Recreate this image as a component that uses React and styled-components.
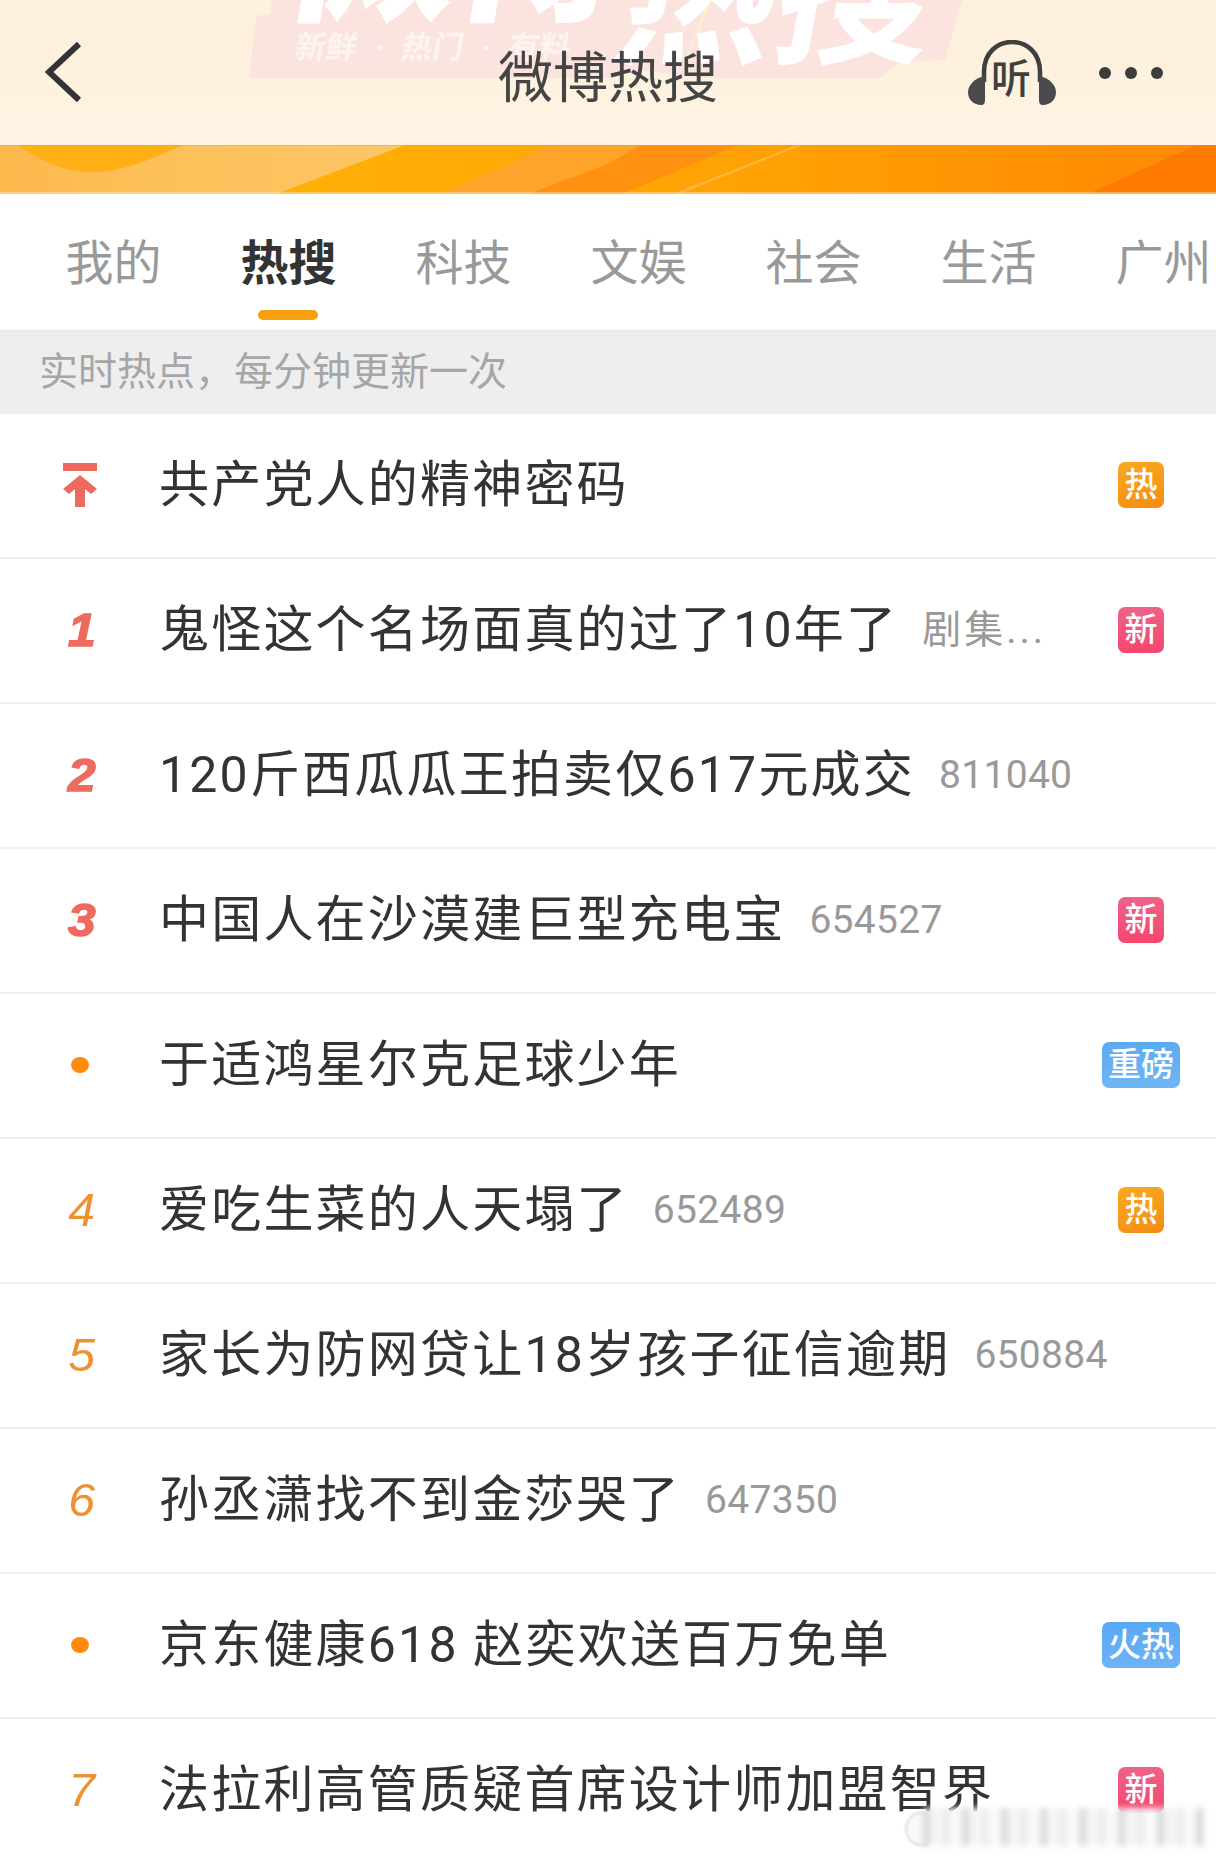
import React from "react";
import styled, { createGlobalStyle } from "styled-components";

const tabs = ["我的", "热搜", "科技", "文娱", "社会", "生活", "广州"];

const rows = [
  { rank: "top", title: "共产党人的精神密码", badge: "热" },
  { rank: "1", title: "鬼怪这个名场面真的过了10年了", sub: "剧集...", badge: "新" },
  { rank: "2", title: "120斤西瓜瓜王拍卖仅617元成交", sub: "811040" },
  { rank: "3", title: "中国人在沙漠建巨型充电宝", sub: "654527", badge: "新" },
  { rank: "dot", title: "于适鸿星尔克足球少年", badge: "重磅" },
  { rank: "4", title: "爱吃生菜的人天塌了", sub: "652489", badge: "热" },
  { rank: "5", title: "家长为防网贷让18岁孩子征信逾期", sub: "650884" },
  { rank: "6", title: "孙丞潇找不到金莎哭了", sub: "647350" },
  { rank: "dot", title: "京东健康618 赵奕欢送百万免单", badge: "火热" },
  { rank: "7", title: "法拉利高管质疑首席设计师加盟智界", badge: "新" },
];

const badgeColors = {
  热: "linear-gradient(160deg, #f9a922, #f58c12)",
  新: "linear-gradient(180deg, #ee6388, #f6466f)",
  重磅: "linear-gradient(180deg, #5caaf0, #6fb6f4)",
  火热: "linear-gradient(180deg, #5aa8f5, #6db3f8)",
};

const App = () => {
  return (
    <Page>
      <GlobalStyle />
      <Header>
        <BannerArt viewBox="0 0 1216 145" aria-hidden="true">
          <path
            d="M272 0 L270 14 L256 16 L249 78 L610 78 L640 70 L700 78 L880 78 L900 62 L945 60 L962 0 Z"
            fill="#fbe4df"
          />
          <path d="M708 0 L686 60 L700 28 L712 0 Z" fill="#fdf1c6" />
        </BannerArt>
        <BannerBig aria-hidden="true">微博</BannerBig>
        <BannerBigRight aria-hidden="true">热搜</BannerBigRight>
        <BannerSmall aria-hidden="true">新鲜 · 热门 · 有料</BannerSmall>
        <BackIcon viewBox="0 0 37 62">
          <path d="M34 3 L4 31 L34 59" fill="none" stroke="#333" strokeWidth="6" />
        </BackIcon>
        <Title>微博热搜</Title>
        <HeaderActions>
          <Listen>
            <svg width="88" height="65" viewBox="0 0 88 65">
              <path
                d="M16 42 V32 C16 12 30 2 44 2 C58 2 72 12 72 32 V42"
                fill="none"
                stroke="#3f3f3f"
                strokeWidth="4.5"
              />
              <path
                d="M17 36 C6 38 0 46 0 52 C0 60 6 65 13 65 C16 65 17 63 17 60 Z"
                fill="#4a4a4a"
              />
              <path
                d="M71 36 C82 38 88 46 88 52 C88 60 82 65 75 65 C72 65 71 63 71 60 Z"
                fill="#4a4a4a"
              />
            </svg>
            <ListenText>听</ListenText>
          </Listen>
          <Dots>
            <i />
            <i />
            <i />
          </Dots>
        </HeaderActions>
      </Header>

      <Band viewBox="0 0 1216 49" preserveAspectRatio="none" aria-hidden="true">
        <defs>
          <linearGradient id="bandBase" x1="0" x2="1" y1="0" y2="0">
            <stop offset="0.2" stopColor="#ffb206" />
            <stop offset="0.65" stopColor="#ffa004" />
            <stop offset="0.92" stopColor="#ff8c02" />
          </linearGradient>
          <linearGradient id="bandLight" x1="0" x2="1" y1="0" y2="0">
            <stop offset="0" stopColor="#fdb84c" />
            <stop offset="0.5" stopColor="#fdc25c" />
            <stop offset="1" stopColor="#fdc565" />
          </linearGradient>
        </defs>
        <rect width="1216" height="49" fill="url(#bandBase)" />
        <path d="M0 0 H405 L276 49 H0 Z" fill="url(#bandLight)" />
        <path d="M18 0 C40 16 64 27 92 27 C122 27 152 14 183 0 Z" fill="#ffb017" />
        <path d="M440 49 L552 0 L640 0 L610 18 L529 49 Z" fill="#ffa42a" />
        <path d="M529 49 L610 18 L640 0 L738 0 L622 49 Z" fill="#ff9010" />
        <path d="M672 49 L797 0 L802 0 L680 49 Z" fill="#ffb53e" />
        <path d="M1088 49 L1197 0 L1216 0 V49 Z" fill="#ff7a00" />
        <rect width="1216" height="1" fill="#d99a2e" opacity="0.3" />
        <rect y="47" width="1216" height="2" fill="#fbe3b8" opacity="0.5" />
      </Band>

      <TabBar>
        {tabs.map((tab) => (
          <Tab key={tab} $active={tab === "热搜"}>
            {tab}
          </Tab>
        ))}
      </TabBar>

      <Notice>实时热点，每分钟更新一次</Notice>

      <List>
        {rows.map((row) => (
          <Row key={row.title}>
            <RankCell>
              {row.rank === "top" && (
                <svg width="34" height="44" viewBox="0 0 34 44">
                  <rect x="0" y="0" width="34" height="8" fill="#ee6a5f" />
                  <path
                    d="M17 12 L34 26 L28 31 L22 26 V44 H12 V26 L6 31 L0 26 Z"
                    fill="#ee6a5f"
                  />
                </svg>
              )}
              {row.rank === "dot" && <Dot />}
              {row.rank !== "top" && row.rank !== "dot" && (
                <RankNumber $hot={Number(row.rank) <= 3}>{row.rank}</RankNumber>
              )}
            </RankCell>
            <RowTitle>{row.title}</RowTitle>
            {row.sub && <RowSub $spread={row.sub.endsWith("...")}>{row.sub}</RowSub>}
            <BadgeCell>
              {row.badge && (
                <Badge $wide={row.badge.length > 1} $bg={badgeColors[row.badge]}>
                  {row.badge}
                </Badge>
              )}
            </BadgeCell>
          </Row>
        ))}
      </List>

      <Watermark aria-hidden="true">
        <WatermarkRing />
        <WatermarkBlur />
      </Watermark>
    </Page>
  );
};

export default App;

const GlobalStyle = createGlobalStyle`
  html, body {
    margin: 0;
    padding: 0;
    background: #fff;
  }
  * {
    box-sizing: border-box;
  }
`;

const Page = styled.div`
  position: relative;
  width: 1216px;
  height: 1857px;
  overflow: hidden;
  background: #fff;
  font-family: Roboto, "Noto Sans CJK SC", sans-serif;
`;

const Header = styled.header`
  position: relative;
  height: 145px;
  overflow: hidden;
  display: grid;
  grid-template-columns: 1fr auto 1fr;
  align-items: center;
  padding: 0 53px;
  background: linear-gradient(180deg, #fdf0dc, #fef2e0 70%, #fff4e4);
`;

const BannerArt = styled.svg`
  position: absolute;
  inset: 0;
  width: 1216px;
  height: 145px;
`;

const BannerBig = styled.span`
  position: absolute;
  left: 292px;
  top: -154px;
  font-size: 172px;
  line-height: 1;
  font-weight: 900;
  font-family: "Noto Sans CJK SC", sans-serif;
  color: #fff;
  white-space: nowrap;
  transform: skewX(-10deg);
`;

const BannerBigRight = styled(BannerBig)`
  left: 622px;
  top: -96px;
  font-size: 158px;
  font-weight: 700;
`;

const BannerSmall = styled.span`
  position: absolute;
  left: 295px;
  top: 30px;
  font-size: 31px;
  line-height: 36px;
  font-weight: 700;
  word-spacing: 10px;
  color: rgba(255, 255, 255, 0.6);
  white-space: pre;
  transform: skewX(-10deg);
`;

const BackIcon = styled.svg`
  position: relative;
  width: 37px;
  height: 62px;
  margin: -2px 0 0 -8px;
`;

const Title = styled.h1`
  position: relative;
  margin: 10px 0 0;
  font-size: 55px;
  line-height: 60px;
  font-weight: 400;
  color: #444;
`;

const HeaderActions = styled.div`
  position: relative;
  display: flex;
  justify-content: flex-end;
  align-items: center;
  gap: 43px;
`;

const Listen = styled.div`
  position: relative;
  width: 88px;
  height: 65px;
`;

const ListenText = styled.span`
  position: absolute;
  left: 21px;
  top: 17px;
  width: 44px;
  text-align: center;
  font-size: 40px;
  line-height: 46px;
  font-weight: 500;
  color: #3f3f3f;
`;

const Dots = styled.div`
  display: flex;
  gap: 14px;
  i {
    display: block;
    width: 12px;
    height: 12px;
    border-radius: 50%;
    background: #3c3c3c;
  }
`;

const Band = styled.svg`
  display: block;
  width: 1216px;
  height: 49px;
`;

const TabBar = styled.nav`
  display: flex;
  height: 137px;
  padding-left: 26px;
  overflow: hidden;
  border-bottom: 1px solid #e6e6e6;
`;

const Tab = styled.div`
  position: relative;
  flex: 0 0 175px;
  text-align: center;
  font-size: 48px;
  line-height: 139px;
  font-weight: ${(p) => (p.$active ? 700 : 400)};
  color: ${(p) => (p.$active ? "#333" : "#999")};
  &::after {
    content: "";
    display: ${(p) => (p.$active ? "block" : "none")};
    position: absolute;
    left: 57px;
    bottom: 10px;
    width: 60px;
    height: 10px;
    border-radius: 5px;
    background: #f9a010;
  }
`;

const Notice = styled.div`
  height: 83px;
  padding-left: 39px;
  font-size: 39px;
  line-height: 83px;
  color: #a6a6a6;
  background: #eeeeee;
`;

const List = styled.ul`
  margin: 0;
  padding: 0;
  list-style: none;
`;

const Row = styled.li`
  display: flex;
  align-items: center;
  height: 145px;
  padding: 0 36px 2px 0;
  border-bottom: 2px solid #efefef;
`;

const RankCell = styled.div`
  flex: 0 0 159px;
  display: flex;
  justify-content: center;
`;

const RankNumber = styled.span`
  display: inline-block;
  margin-left: 4px;
  font-family: "Liberation Sans", sans-serif;
  font-style: italic;
  font-size: 46px;
  line-height: 50px;
  font-weight: ${(p) => (p.$hot ? 700 : 400)};
  color: ${(p) => (p.$hot ? "#ee6a5f" : "#ee9130")};
  transform: scaleX(${(p) => (p.$hot ? 1.08 : 1.05)});
  -webkit-text-stroke: ${(p) => (p.$hot ? "1.5px #ee6a5f" : "0")};
`;

const Dot = styled.span`
  display: block;
  width: 18px;
  height: 16px;
  border-radius: 50%;
  background: #ff8a0c;
`;

const RowTitle = styled.span`
  font-size: 50px;
  line-height: 60px;
  letter-spacing: 2.2px;
  color: #333;
  white-space: nowrap;
`;

const RowSub = styled.span`
  margin-left: 24px;
  font-size: 39px;
  line-height: 50px;
  letter-spacing: ${(p) => (p.$spread ? "3px" : "0.3px")};
  color: #999;
  white-space: nowrap;
`;

const BadgeCell = styled.div`
  margin-left: auto;
  width: 78px;
  display: flex;
  justify-content: center;
`;

const Badge = styled.span`
  width: ${(p) => (p.$wide ? "78px" : "46px")};
  height: 46px;
  border-radius: 7px;
  text-align: center;
  font-size: 33px;
  line-height: 45px;
  font-weight: 500;
  color: #fff;
  background: ${(p) => p.$bg};
`;

// blurred source credit in the corner, sits over the last row
const Watermark = styled.div`
  position: absolute;
  left: 905px;
  top: 1808px;
  width: 300px;
  height: 40px;
`;

const WatermarkRing = styled.span`
  position: absolute;
  left: 0;
  top: 4px;
  width: 32px;
  height: 34px;
  border-radius: 50%;
  border: 2px solid #dedede;
  background: #f9f9f9;
  filter: blur(1px);
`;

const WatermarkBlur = styled.span`
  position: absolute;
  left: 18px;
  top: 0;
  width: 282px;
  height: 38px;
  filter: blur(3px);
  background: repeating-linear-gradient(
    90deg,
    #d9d9d9 0 7px,
    #f5f5f5 7px 21px,
    #e6e6e6 21px 26px,
    #fafafa 26px 39px
  );
`;
